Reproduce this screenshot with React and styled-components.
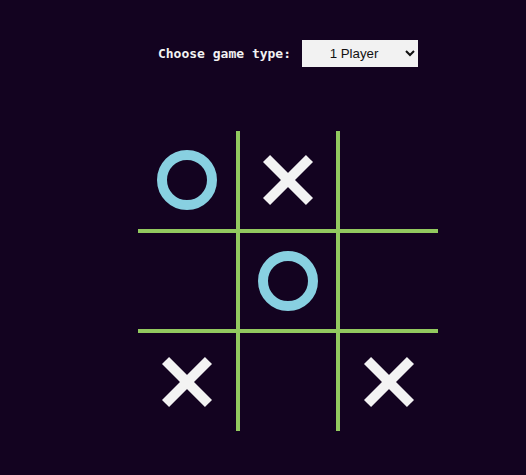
import React, { useState } from "react";
import styled, { createGlobalStyle } from "styled-components";

const Global = createGlobalStyle`
  html, body { background: #130320; }
  body { margin: 8px; font-family: "DejaVu Sans Mono", monospace; overflow: hidden; }
`;

const Page = styled.div`
  display: flex;
  flex-direction: column;
  align-items: center;
  padding-left: 50px;
`;

const Toolbar = styled.div`
  display: flex;
  align-items: center;
  gap: 11px;
  margin-top: 32px;
`;

const Label = styled.label`
  font-family: "DejaVu Sans Mono", monospace;
  font-weight: bold;
  font-size: 13px;
  color: #f2f2f2;
`;

const Select = styled.select`
  width: 116px;
  height: 27px;
  border: none;
  border-radius: 0;
  background: #f2f2f2;
  color: #111;
  font-family: "Liberation Sans", Arial, sans-serif;
  font-size: 13.3px;
  text-align: center;
  text-align-last: center;
  outline: none;
`;

const Board = styled.div`
  margin-top: 64px;
  display: grid;
  grid-template-columns: 98px 96px 98px;
  grid-template-rows: 98px 96px 98px;
  gap: 4px;
  background: #92c95f;
  width: 300px;
  height: 300px;
`;

const Cell = styled.div`
  background: #130320;
  display: flex;
  align-items: center;
  justify-content: center;
  cursor: pointer;
`;

const OMark = () => (
  <svg width="60" height="60" viewBox="0 0 60 60">
    <circle cx="30" cy="30" r="25" fill="none" stroke="#88d0e1" strokeWidth="10" />
  </svg>
);

const XMark = () => (
  <svg width="50" height="50" viewBox="0 0 50 50">
    <g stroke="#f3f3f3" strokeWidth="10" strokeLinecap="butt">
      <line x1="3.54" y1="3.54" x2="46.46" y2="46.46" />
      <line x1="46.46" y1="3.54" x2="3.54" y2="46.46" />
    </g>
  </svg>
);

const initial = ["O", "X", null, null, "O", null, "X", null, "X"];

export default function App() {
  const [mode, setMode] = useState("1");
  const [cells] = useState(initial);
  return (
    <>
      <Global />
      <Page>
        <Toolbar>
          <Label htmlFor="mode">Choose game type:</Label>
          <Select id="mode" value={mode} onChange={(e) => setMode(e.target.value)}>
            <option value="1">1 Player</option>
            <option value="2">2 Players</option>
          </Select>
        </Toolbar>
        <Board>
          {cells.map((c, i) => (
            <Cell key={i}>
              {c === "O" && <OMark />}
              {c === "X" && <XMark />}
            </Cell>
          ))}
        </Board>
      </Page>
    </>
  );
}
